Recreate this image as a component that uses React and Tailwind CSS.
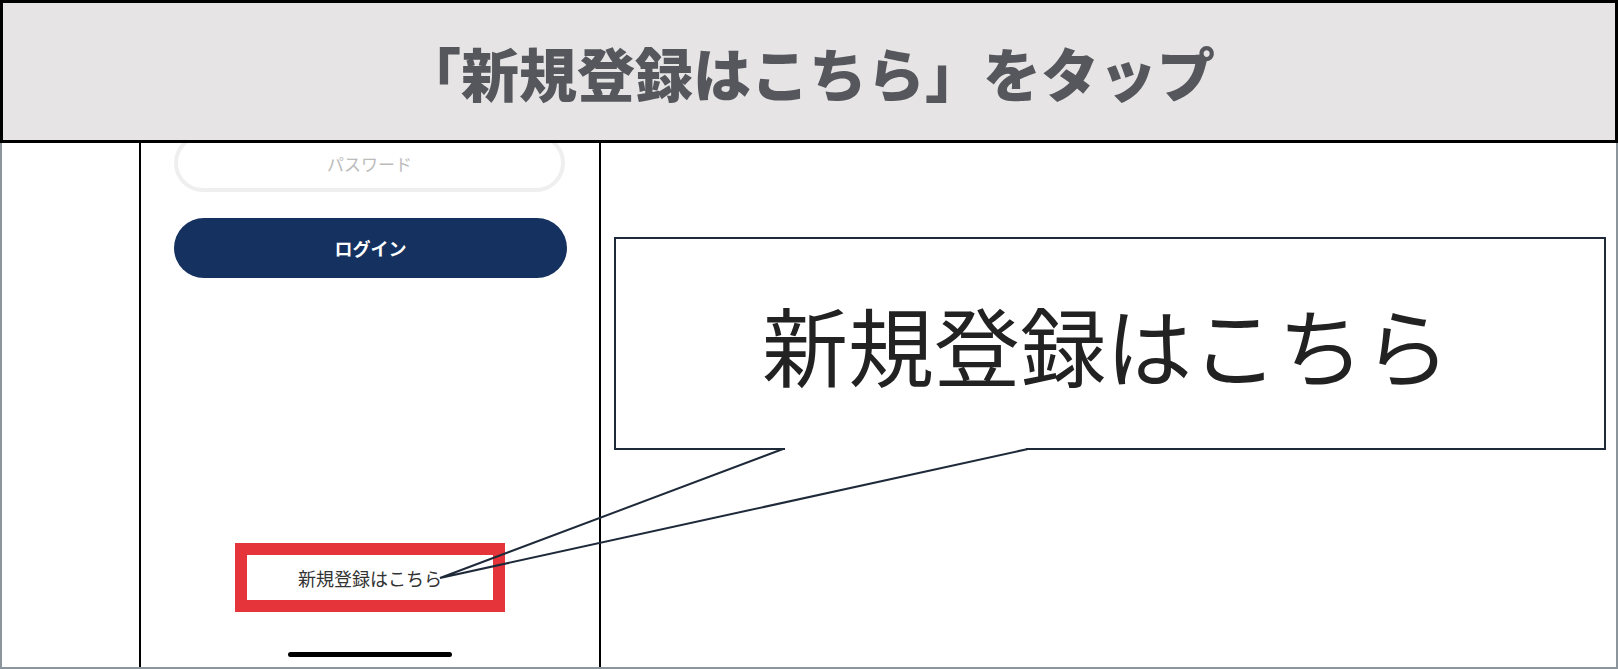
const jp = "font-['Noto_Sans_CJK_JP','Noto_Sans',sans-serif]"

function PhoneScreen() {
  return (
    <div className="w-[462px] shrink-0 border-l-2 border-r-2 border-black flex flex-col items-start overflow-hidden">
      {/* password field, top cut by the header */}
      <div className="ml-[33px] -mt-[9px] w-[391px] h-[58px] shrink-0 rounded-full border-4 border-[#efefef] flex items-center justify-center">
        <span className="text-[17px] text-[#bcbcbc] leading-none">パスワード</span>
      </div>

      <button className="ml-[33px] mt-[26px] w-[393px] h-[60px] shrink-0 rounded-full bg-[#15315f] text-white text-[18px] font-bold">
        ログイン
      </button>

      <div className="ml-[94px] mt-[265px] w-[270px] h-[69px] shrink-0 border-[12px] border-[#e5353a] flex items-center justify-center">
        <span className="text-[18px] text-[#333] leading-none">新規登録はこちら</span>
      </div>

      <div className="ml-[147px] mt-[40px] w-[164px] h-[5px] shrink-0 rounded-full bg-black" />
    </div>
  )
}

export default function App() {
  return (
    <div className={`relative w-[1618px] h-[669px] bg-white overflow-hidden ${jp}`}>
      <header className="h-[143px] border-[3px] border-black bg-[#e6e4e5] flex items-center justify-center">
        <h1 className="text-[58px] font-black text-[#55575c] leading-none tracking-normal">
          「新規登録はこちら」をタップ
        </h1>
      </header>

      <div className="flex h-[526px] border-l-2 border-r-2 border-b-2 border-[#8d959c]">
        <div className="w-[137px] shrink-0" />
        <PhoneScreen />
        <div className="flex-1 pl-[13px] pt-[94px]">
          <div className="w-[992px] h-[213px] border-2 border-[#1e2a3a] flex items-center justify-center pr-[8px]">
            <span className="text-[86px] text-[#222] leading-none">新規登録はこちら</span>
          </div>
        </div>
      </div>

      {/* callout tail */}
      <svg className="absolute inset-0 pointer-events-none" width="1618" height="669">
        <line x1="785" y1="449" x2="1026" y2="449" stroke="#fff" strokeWidth="3" />
        <polyline
          points="783,449 440,578 1028,449"
          fill="none"
          stroke="#1e2a3a"
          strokeWidth="2"
          strokeLinejoin="miter"
        />
      </svg>
    </div>
  )
}
